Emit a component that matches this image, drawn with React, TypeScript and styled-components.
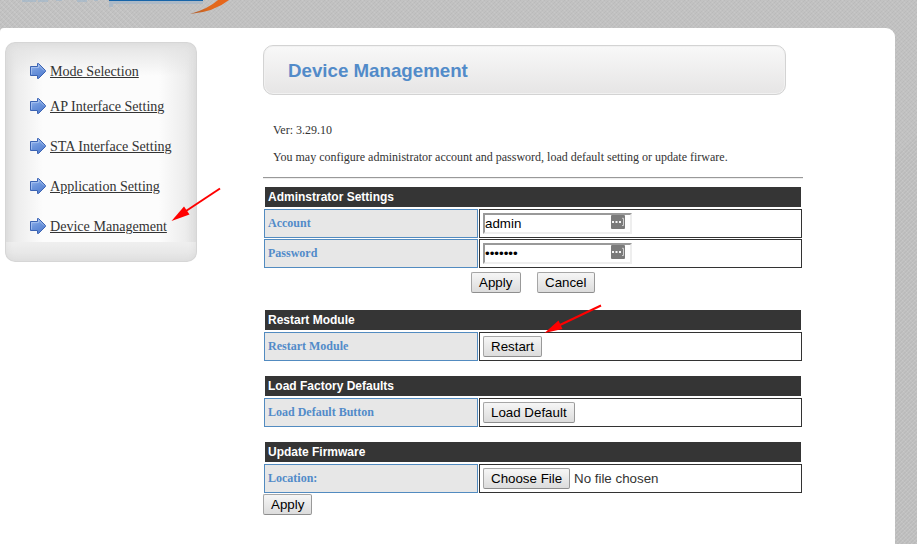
import React from 'react';
import styled, { createGlobalStyle } from 'styled-components';

const GlobalStyle = createGlobalStyle`
  * { box-sizing: border-box; }
  html, body { margin: 0; padding: 0; }
  body {
    overflow: hidden;
    font-family: 'Liberation Serif', 'Times New Roman', serif;
    font-size: 12px;
    color: #333;
  }
`;

const Page = styled.div`
  position: relative;
  width: 917px;
  height: 544px;
  overflow: hidden;
  background-color: #c2c2c2;
  background-image:
    repeating-linear-gradient(135deg, rgba(90, 90, 90, 0.07) 0 1px, transparent 1px 2.83px),
    repeating-linear-gradient(45deg, rgba(255, 255, 255, 0.1) 0 1px, transparent 1px 4.24px);
`;

const Banner = styled.header`
  height: 28px;
  svg { display: block; }
`;

const Sheet = styled.main`
  display: flex;
  align-items: flex-start;
  width: 895px;
  height: 530px;
  background: #fff;
  border-radius: 4px 9px 0 0;
`;

const Sidebar = styled.nav`
  display: flex;
  flex-direction: column;
  width: 192px;
  height: 220px;
  margin: 14px 66px 0 5px;
  padding: 18px 0 0 25px;
  border-radius: 10px;
  background:
    linear-gradient(#efefef, #e2e2e2) 0 200px / 100% 20px no-repeat,
    linear-gradient(#e2e2e2, #e2e2e200 34px),
    linear-gradient(90deg, #dedede, #ededed 12px, #fcfcfc00 38px, #fcfcfc00 154px, #ededed 180px, #dedede),
    #fcfcfc;
  box-shadow: inset 0 0 0 1px #d6d6d6, inset 0 0 8px #d8d8d8;
`;

const NavItem = styled.a<{ $gap?: number }>`
  display: flex;
  align-items: flex-start;
  height: 20px;
  margin-bottom: ${p => p.$gap ?? 20}px;
  gap: 4px;
  padding-top: 3px;
  color: #333;
  font-size: 14.08px;
  line-height: 16px;
  white-space: nowrap;
  span { text-decoration: underline; }
`;

const Content = styled.section`
  width: 540px;
  padding-top: 17px;
`;

const TitleBox = styled.h1`
  width: 523px;
  height: 50px;
  margin: 0 0 28px;
  padding-left: 24px;
  border: 1px solid #d3d3d3;
  border-radius: 10px;
  background: linear-gradient(#f8f8f8, #e6e5e5);
  box-shadow: inset 0 0 0 1px #f1f1f1;
  color: #528bc9;
  font: bold 18.72px/49px 'Liberation Sans', Arial, sans-serif;
`;

const Info = styled.p`
  height: 14px;
  margin: 0 0 13px 10px;
  line-height: 14px;
  white-space: nowrap;
`;

const Rule = styled.hr`
  height: 2px;
  margin: 0 0 8px;
  border: 0;
  border-top: 1px solid #999;
  border-bottom: 1px solid #eee;
`;

const Group = styled.section<{ $after?: number }>`
  margin-bottom: ${p => p.$after ?? 15}px;
`;

const GroupTitle = styled.h2`
  width: 536px;
  height: 20px;
  margin: 0 0 2px 2px;
  padding-left: 3px;
  background: #353535;
  color: #fff;
  font: bold 12px/20px 'Liberation Sans', Arial, sans-serif;
`;

const Row = styled.div`
  display: grid;
  grid-template-columns: 214px 323px;
  column-gap: 1px;
  height: 29px;
  margin-left: 1px;
  & + & { margin-top: 1px; }
`;

const Label = styled.label`
  padding-left: 3px;
  border: 1px solid #528bc0;
  background: #e7e7e7;
  color: #528bc9;
  font-weight: bold;
  line-height: 27px;
`;

const Value = styled.div`
  display: flex;
  align-items: center;
  gap: 4px;
  padding-left: 3px;
  border: 1px solid #333;
  font: 13.333px 'Liberation Sans', Arial, sans-serif;
`;

const Field = styled.div`
  position: relative;
  width: 149px;
  height: 21px;
`;

const Input = styled.input`
  display: block;
  width: 149px;
  height: 21px;
  padding: 1px 0;
  border: 2px solid;
  border-color: #999 #eee #eee #999;
  border-radius: 0;
  outline: 0;
  background: #fff;
  color: #000;
  font: 13.333px 'Liberation Sans', Arial, sans-serif;
`;

const FieldBadge = styled.svg`
  position: absolute;
  top: 2px;
  left: 128px;
`;

const Button = styled.button<{ $w: number }>`
  width: ${p => p.$w}px;
  height: 21px;
  padding: 0 0 0 7px;
  border: 1px solid;
  border-color: #a6a6a6 #999 #8e8e8e #a6a6a6;
  border-radius: 2px;
  background: linear-gradient(#f6f6f6, #dcdcdc);
  color: #000;
  font: 13.333px/19px 'Liberation Sans', Arial, sans-serif;
  text-align: left;
  white-space: nowrap;
`;

const Actions = styled.div`
  display: flex;
  gap: 16px;
  margin: 4px 0 17px 208px;
`;

const Pointers = styled.svg`
  position: absolute;
  inset: 0;
  pointer-events: none;
`;

const Logo = () => (
  <svg width="260" height="28" viewBox="0 0 260 28">
    <defs>
      <linearGradient id="swoosh" x1="0" x2="1">
        <stop offset="0" stopColor="#a85a2d" />
        <stop offset="0.5" stopColor="#e16a1d" />
        <stop offset="1" stopColor="#e8641a" />
      </linearGradient>
    </defs>
    <path d="M22 0h14v2H22zM38 0h10v2H38zM56 0h6v1h-6zM77 0h10v2H77zM94 0h4v1h-4z" fill="#9db6cb" opacity="0.6" />
    <path d="M109 1H203V4H113V7H109Z" fill="#a5b7c8" opacity="0.75" />
    <path d="M109 0H203V1H109Z" fill="#1664a8" />
    <path d="M190 14Q208 9 218 0H229Q214 12 190 14Z" fill="url(#swoosh)" />
  </svg>
);

const ArrowIcon = () => (
  <svg width="16" height="16" viewBox="0 0 16 16">
    <defs>
      <linearGradient id="arrow" x1="0" y1="0" x2="0.5" y2="1">
        <stop offset="0" stopColor="#a9c2f0" />
        <stop offset="0.5" stopColor="#6f97dd" />
        <stop offset="1" stopColor="#5580d0" />
      </linearGradient>
    </defs>
    <path d="M.5 3.5H7.5V.5H8.5L15.5 7.5V8.5L8.5 15.5H7.5V12.5H.5Z" fill="url(#arrow)" stroke="#3a62b2" />
    <path d="M1.5 11.5V4.5H8.5V2L14 7.5" fill="none" stroke="#b0c8f2" strokeWidth="0.7" />
  </svg>
);

const Badge = () => (
  <FieldBadge width="14" height="14" viewBox="0 0 14 14">
    <rect width="14" height="14" rx="1" fill="#7b7b7b" />
    <path d="M1 6h2v2H1zM4.500 6h2v2h-2zM8 6h2v2H8z" fill="#f5f5f5" />
    <path d="M11 3.300H12.500V10.500H11" fill="none" stroke="#e5e5e5" strokeWidth="0.8" />
  </FieldBadge>
);

const NAV = [
  { text: 'Mode Selection', gap: 15 },
  { text: 'AP Interface Setting' },
  { text: 'STA Interface Setting' },
  { text: 'Application Setting' },
  { text: 'Device Management' },
];

export default function App() {
  return (
    <Page>
      <GlobalStyle />
      <Banner><Logo /></Banner>
      <Sheet>
        <Sidebar>
          {NAV.map(item => (
            <NavItem key={item.text} $gap={item.gap}>
              <ArrowIcon />
              <span>{item.text}</span>
            </NavItem>
          ))}
        </Sidebar>
        <Content>
          <TitleBox>Device Management</TitleBox>
          <Info>Ver: 3.29.10</Info>
          <Info>You may configure administrator account and password, load default setting or update firware.</Info>
          <Rule />
          <Group $after={0}>
            <GroupTitle>Adminstrator Settings</GroupTitle>
            <Row>
              <Label>Account</Label>
              <Value><Field><Input defaultValue="admin" /><Badge /></Field></Value>
            </Row>
            <Row>
              <Label>Password</Label>
              <Value><Field><Input type="password" defaultValue="admin12" /><Badge /></Field></Value>
            </Row>
          </Group>
          <Actions>
            <Button $w={50}>Apply</Button>
            <Button $w={58}>Cancel</Button>
          </Actions>
          <Group>
            <GroupTitle>Restart Module</GroupTitle>
            <Row>
              <Label>Restart Module</Label>
              <Value><Button $w={59}>Restart</Button></Value>
            </Row>
          </Group>
          <Group>
            <GroupTitle>Load Factory Defaults</GroupTitle>
            <Row>
              <Label>Load Default Button</Label>
              <Value><Button $w={92}>Load Default</Button></Value>
            </Row>
          </Group>
          <Group $after={1}>
            <GroupTitle>Update Firmware</GroupTitle>
            <Row>
              <Label>Location:</Label>
              <Value><Button $w={87}>Choose File</Button>No file chosen</Value>
            </Row>
          </Group>
          <Button $w={49}>Apply</Button>
        </Content>
      </Sheet>
      <Pointers width="917" height="544" viewBox="0 0 917 544">
        <g stroke="#f00" strokeWidth="2" fill="#f00">
          <path d="M220 188.500L186 211" />
          <path d="M171.500 221L184 206.500L189.500 214.500Z" stroke="none" />
          <path d="M601 305.500L560 325" />
          <path d="M544.500 333L558.500 320.500L562.500 329Z" stroke="none" />
        </g>
      </Pointers>
    </Page>
  );
}
